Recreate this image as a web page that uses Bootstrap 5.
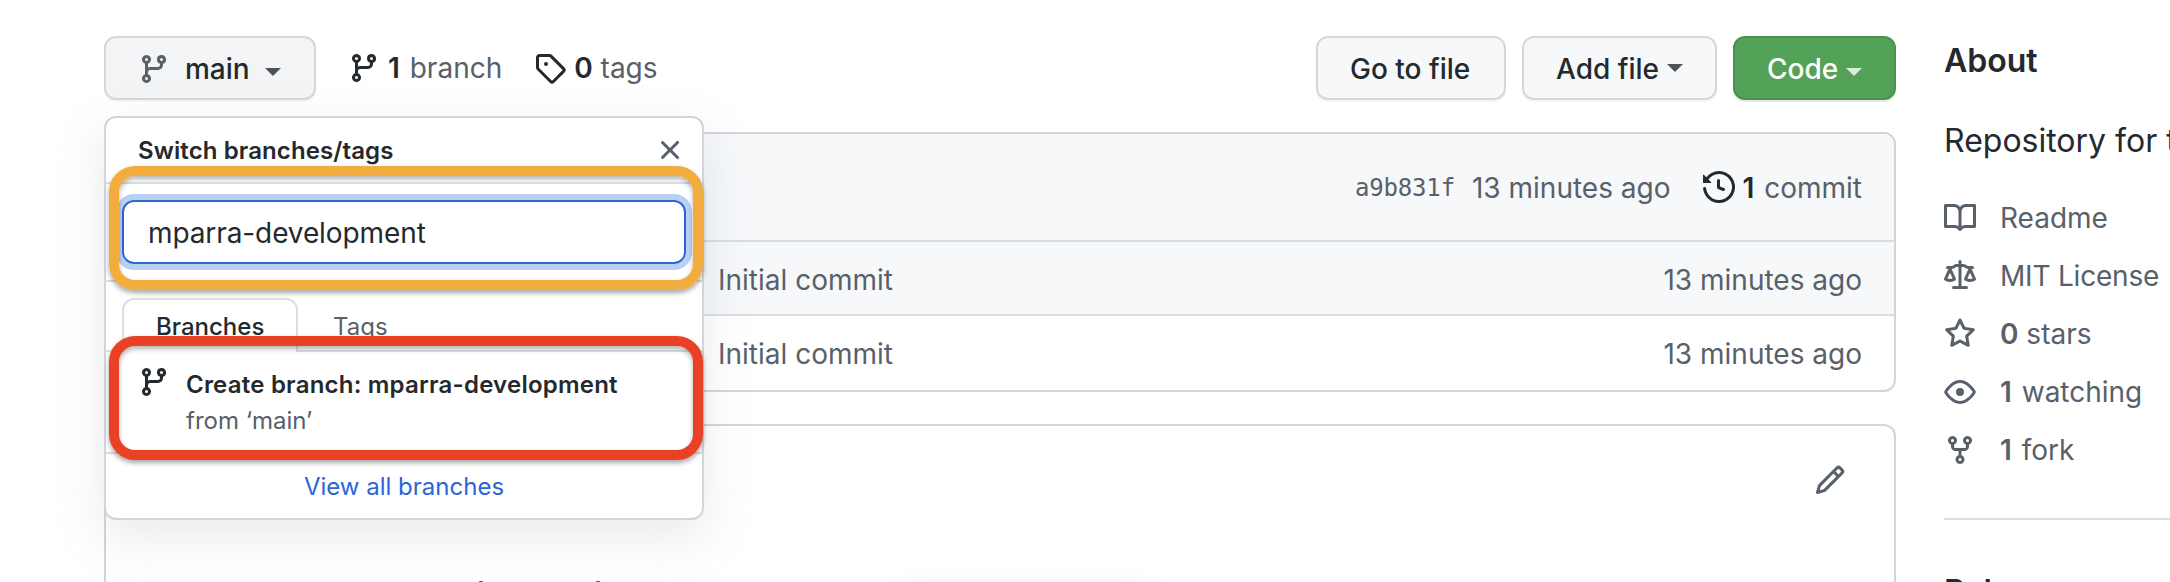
<!DOCTYPE html>
<html lang="en">
<head>
<meta charset="utf-8">
<title>Repository</title>
<link href="https://cdn.jsdelivr.net/npm/bootstrap@5.3.0/dist/css/bootstrap.min.css" rel="stylesheet">
<style>
:root{--ink:#24292e;--soft:#586069;--line:#d1d5da;--tint:#f6f8fa}
html,body{overflow:hidden}
body{font:28px/42px Inter,"Liberation Sans",sans-serif;color:var(--ink);width:2170px;height:582px;background:#fff}
svg{fill:currentColor;flex:none;width:32px;height:32px;display:block}
.soft{color:var(--soft)}
b,.semi{font-weight:600}
.one{margin-right:2px}
.t{display:inline-block;white-space:pre}
.page{padding:36px 0 0 104px;gap:48px;height:582px;overflow:hidden;position:relative}
.repo{width:1792px;flex:none}
.toolbar{height:64px;position:relative}
.gbtn{--bs-btn-font-size:28px;height:64px;border:2px solid #d5d7da;border-radius:12px;background:var(--tint);color:var(--ink);font-weight:500;padding:2px 32px 0;line-height:42px;display:flex;align-items:center;box-shadow:0 2px 0 rgba(27,31,35,.04);white-space:pre}
.gbtn.pressed{background:#f3f4f6}
.gbtn.green{background:#54a258;border-color:#489150;color:#fff;box-shadow:0 2px 0 rgba(27,31,35,.1)}
.tri{border:8px solid transparent;border-top-color:currentColor;border-bottom:0;opacity:.8;display:block;margin:-2px 0 0 8px}
.tri.low{margin-top:6px}
.panel{border:2px solid var(--line);border-radius:12px;overflow:hidden}
.listing{margin-top:32px;height:260px}
.commitbar{height:106px;background:var(--tint);padding:0 32px}
.commitbar span{padding-top:2px}
.filerow{height:74px;border-top:2px solid #d8dde2;padding:4px 32px 0 612px}
.filerow.first{background:var(--tint)}
.hash{font:24px/42px "DejaVu Sans Mono","Liberation Mono",monospace;letter-spacing:-.15px}
.menu{position:absolute;left:0;top:80px;width:600px;height:404px;background:#fff;border:2px solid var(--line);border-radius:12px;box-shadow:0 16px 48px rgba(149,157,165,.22);font-size:24px;line-height:36px;z-index:5}
.menu-head{height:66px;border-bottom:2px solid #dadfe4;padding:0 16px 0 32px}
.menu-head span{padding-top:1px;letter-spacing:.1px}
.menu-field{height:98px;border-bottom:2px solid #dadfe4;padding:16px}
.field{width:564px;height:64px;border:2px solid #2b65d9;border-radius:12px;box-shadow:0 0 0 6px #b9d0f1;padding:0 24px;line-height:62px;font-size:28px;letter-spacing:-.1px}
.tabs{height:70px;padding:16px 0 0 16px;border-bottom:2px solid #dadfe4}
.tab{width:176px;height:54px;border:2px solid #dadfe4;border-bottom:0;border-radius:12px 12px 0 0;background:#fff;padding:9px 0 0 32px}
.create{height:102px;padding:14px 32px 0;border-bottom:2px solid #dadfe4}
.ring{position:absolute;left:3px;width:594px;height:124px;border:10px solid #f2ad3e;border-radius:26px;box-shadow:0 3px 5px rgba(0,0,0,.35),inset 0 3px 5px rgba(0,0,0,.3)}
.ring.red{border-color:#ea4025}
.readme{margin-top:32px;height:158px;border-bottom:0;border-radius:12px 12px 0 0;padding:38px 48px 0 372px}
.peek{height:3px;gap:111px}
.peek i{width:6px;height:3px;background:#3a3e43;border-radius:3px 3px 0 0}
.toast-shade{position:absolute;left:900px;top:592px;width:250px;height:40px;box-shadow:0 0 26px rgba(0,0,0,.12)}
.side{width:226px;overflow:hidden;flex:none;white-space:nowrap}
.side h2{font-size:32px;line-height:48px;font-weight:600;margin:0;padding-top:1px}
.lede{font-size:32px;line-height:48px;margin-top:32px}
.meta{height:58px;gap:24px}
</style>
</head>
<body>
<svg class="d-none">
<symbol id="branch" viewBox="0 0 16 16"><path fill-rule="evenodd" d="M11.75 2.5a.75.75 0 100 1.5.75.75 0 000-1.5zm-2.25.75a2.25 2.25 0 113 2.122V6A2.5 2.5 0 0110 8.5H6a1 1 0 00-1 1v1.128a2.251 2.251 0 11-1.5 0V5.372a2.25 2.25 0 111.5 0v1.836A2.492 2.492 0 016 7h4a1 1 0 001-1v-.628A2.25 2.25 0 019.5 3.25zM4.25 12a.75.75 0 100 1.5.75.75 0 000-1.5zM3.5 3.25a.75.75 0 111.5 0 .75.75 0 01-1.5 0z"/></symbol>
</svg>
<div class="page d-flex">
<main class="repo">
  <div class="toolbar d-flex align-items-center">
    <button class="btn gbtn pressed" style="width:212px"><svg class="soft"><use href="#branch"/></svg><span class="t" style="margin-left:15px">main</span><i class="tri low" style="margin-left:15px"></i></button>
    <svg style="margin-left:32px"><use href="#branch"/></svg>
    <span class="t" style="margin-left:8px"><b class="one">1</b> <span class="soft">branch</span></span>
    <svg viewBox="0 0 16 16" style="margin-left:32px"><path fill-rule="evenodd" d="M2.5 7.775V2.75a.25.25 0 01.25-.25h5.025a.25.25 0 01.177.073l6.25 6.25a.25.25 0 010 .354l-5.025 5.025a.25.25 0 01-.354 0l-6.25-6.25a.25.25 0 01-.073-.177zm-1.5 0V2.75C1 1.784 1.784 1 2.75 1h5.025c.464 0 .91.184 1.238.513l6.25 6.25a1.75 1.75 0 010 2.474l-5.026 5.026a1.75 1.75 0 01-2.474 0l-6.25-6.25A1.75 1.75 0 011 7.775zM6 5a1 1 0 100 2 1 1 0 000-2z"/></svg>
    <span class="t" style="margin-left:8px"><b>0</b> <span class="soft">tags</span></span>
    <div class="d-flex gap-3 ms-auto">
      <button class="btn gbtn" style="width:190px">Go to file</button>
      <button class="btn gbtn" style="width:195px">Add file<i class="tri"></i></button>
      <button class="btn gbtn green" style="width:163px">Code<i class="tri low"></i></button>
    </div>
    <div class="menu">
      <div class="menu-head d-flex align-items-center justify-content-between"><span class="semi">Switch branches/tags</span><svg class="soft" viewBox="0 0 16 16"><path d="M3.72 3.72a.75.75 0 011.06 0L8 6.94l3.22-3.22a.75.75 0 111.06 1.06L9.06 8l3.22 3.22a.75.75 0 11-1.06 1.06L8 9.06l-3.22 3.22a.75.75 0 01-1.06-1.06L6.94 8 3.72 4.78a.75.75 0 010-1.06z"/></svg></div>
      <div class="menu-field"><div class="field">mparra-development</div></div>
      <div class="tabs d-flex"><div class="tab fw-medium">Branches</div><div class="soft" style="padding:11px 0 0 35px">Tags</div></div>
      <div class="create d-flex"><svg><use href="#branch"/></svg><div style="margin:1px 0 0 16px"><div class="semi" style="letter-spacing:.22px">Create branch: mparra-development</div><div class="soft">from ‘main’</div></div></div>
      <div class="text-center" style="color:#2b65d9;padding-top:15px">View all branches</div>
      <div class="ring" style="top:48px"></div>
      <div class="ring red" style="top:218px"></div>
    </div>
  </div>
  <div class="panel listing">
    <div class="commitbar d-flex align-items-center justify-content-end soft"><span class="hash">a9b831f</span><span style="margin-left:17px">13 minutes ago</span><svg viewBox="0 0 16 16" style="margin-left:32px;color:var(--ink)"><path fill-rule="evenodd" d="M1.643 3.143L.427 1.927A.25.25 0 000 2.104V5.75c0 .138.112.25.25.25h3.646a.25.25 0 00.177-.427L2.715 4.215a6.5 6.5 0 11-1.18 4.458.75.75 0 10-1.493.154 8.001 8.001 0 101.6-5.684zM7.75 4a.75.75 0 01.75.75v2.992l2.028.812a.75.75 0 01-.557 1.392l-2.5-1A.75.75 0 017 8.25v-3.5A.75.75 0 017.75 4z"/></svg><span style="margin-left:8px"><b class="one" style="color:var(--ink)">1</b> commit</span></div>
    <div class="filerow first d-flex align-items-center justify-content-between soft"><span>Initial commit</span><span>13 minutes ago</span></div>
    <div class="filerow d-flex align-items-center justify-content-between soft"><span>Initial commit</span><span>13 minutes ago</span></div>
  </div>
  <div class="panel readme d-flex flex-column"><svg class="soft align-self-end" viewBox="0 0 16 16"><path fill-rule="evenodd" d="M11.013 1.427a1.75 1.75 0 012.474 0l1.086 1.086a1.75 1.75 0 010 2.474l-8.61 8.61c-.21.21-.47.364-.756.445l-3.251.93a.75.75 0 01-.927-.928l.929-3.25a1.75 1.75 0 01.445-.758l8.61-8.61zm1.414 1.06a.25.25 0 00-.354 0L10.811 3.75l1.439 1.44 1.263-1.263a.25.25 0 000-.354l-1.086-1.086zM11.189 6.25L9.75 4.81l-6.286 6.287a.25.25 0 00-.064.108l-.558 1.953 1.953-.558a.249.249 0 00.108-.064l6.286-6.286z"/></svg><div class="peek d-flex mt-auto" style="margin-bottom:-2px"><i></i><i></i></div></div>
</main>
<aside class="side">
  <h2>About</h2>
  <div class="lede">Repository for the</div>
  <div class="soft" style="margin-top:24px">
    <div class="meta d-flex align-items-center"><svg viewBox="0 0 16 16"><path fill-rule="evenodd" d="M0 1.75A.75.75 0 01.75 1h4.253c1.227 0 2.317.59 3 1.501A3.744 3.744 0 0111.006 1h4.245a.75.75 0 01.75.75v10.5a.75.75 0 01-.75.75h-4.507a2.25 2.25 0 00-1.591.659l-.622.621a.75.75 0 01-1.06 0l-.622-.621A2.25 2.25 0 005.258 13H.75a.75.75 0 01-.75-.75V1.75zm8.755 3a2.25 2.25 0 012.25-2.25H14.5v9h-3.757c-.71 0-1.4.201-1.992.572l.004-7.322zm-1.504 7.324l.004-5.073-.002-2.253A2.25 2.25 0 005.003 2.5H1.5v9h3.757a3.75 3.75 0 011.994.574z"/></svg><span>Readme</span></div>
    <div class="meta d-flex align-items-center"><svg viewBox="0 0 16 16"><path fill-rule="evenodd" d="M8.75.75a.75.75 0 00-1.5 0V2h-.984c-.305 0-.604.08-.869.23l-1.288.737A.25.25 0 013.984 3H1.75a.75.75 0 000 1.5h.428L.066 9.192a.75.75 0 00.154.838l.53-.53-.53.53v.001l.002.002.002.002.006.006.016.015.045.04a3.514 3.514 0 00.686.45A4.492 4.492 0 003 11c.88 0 1.556-.22 2.023-.454a3.515 3.515 0 00.686-.45l.045-.04.016-.015.006-.006.002-.002.001-.002L5.25 9.5l.53.53a.75.75 0 00.154-.838L3.822 4.5h.162c.305 0 .604-.08.869-.23l1.289-.737a.25.25 0 01.124-.033h.984V13h-2.5a.75.75 0 000 1.5h6.5a.75.75 0 000-1.5h-2.5V3.5h.984a.25.25 0 01.124.033l1.29.736c.264.152.563.231.868.231h.162l-2.112 4.692a.75.75 0 00.154.838l.53-.53-.53.53v.001l.002.002.002.002.006.006.016.015.045.04a3.517 3.517 0 00.686.45A4.492 4.492 0 0013 11c.88 0 1.556-.22 2.023-.454a3.512 3.512 0 00.686-.45l.045-.04.01-.01.006-.005.006-.006.002-.002.001-.002-.529-.531.53.53a.75.75 0 00.154-.838L13.823 4.5h.427a.75.75 0 000-1.5h-2.234a.25.25 0 01-.124-.033l-1.29-.736A1.75 1.75 0 009.735 2H8.75V.75zM1.695 9.227c.285.135.718.273 1.305.273s1.02-.138 1.305-.273L3 6.327l-1.305 2.9zm10 0c.285.135.718.273 1.305.273s1.02-.138 1.305-.273L13 6.327l-1.305 2.9z"/></svg><span style="letter-spacing:-.2px">MIT License</span></div>
    <div class="meta d-flex align-items-center"><svg viewBox="0 0 16 16"><path fill-rule="evenodd" d="M8 .25a.75.75 0 01.673.418l1.882 3.815 4.21.612a.75.75 0 01.416 1.279l-3.046 2.97.719 4.192a.75.75 0 01-1.088.791L8 12.347l-3.766 1.98a.75.75 0 01-1.088-.79l.72-4.194L.818 6.374a.75.75 0 01.416-1.28l4.21-.611L7.327.668A.75.75 0 018 .25zm0 2.445L6.615 5.5a.75.75 0 01-.564.41l-3.097.45 2.24 2.184a.75.75 0 01.216.664l-.528 3.084 2.769-1.456a.75.75 0 01.698 0l2.77 1.456-.53-3.084a.75.75 0 01.216-.664l2.24-2.183-3.096-.45a.75.75 0 01-.564-.41L8 2.694v.001z"/></svg><span><b>0</b> stars</span></div>
    <div class="meta d-flex align-items-center"><svg viewBox="0 0 16 16"><path fill-rule="evenodd" d="M1.679 7.932c.412-.621 1.242-1.75 2.366-2.717C5.175 4.242 6.527 3.5 8 3.5c1.473 0 2.824.742 3.955 1.715 1.124.967 1.954 2.096 2.366 2.717a.119.119 0 010 .136c-.412.621-1.242 1.75-2.366 2.717C10.825 11.758 9.473 12.5 8 12.5c-1.473 0-2.824-.742-3.955-1.715C2.92 9.818 2.09 8.69 1.679 8.068a.119.119 0 010-.136zM8 2c-1.981 0-3.67.992-4.933 2.078C1.797 5.169.88 6.423.43 7.1a1.619 1.619 0 000 1.798c.45.678 1.367 1.932 2.637 3.024C4.329 13.008 6.019 14 8 14c1.981 0 3.67-.992 4.933-2.078 1.27-1.091 2.187-2.345 2.637-3.023a1.619 1.619 0 000-1.798c-.45-.678-1.367-1.932-2.637-3.023C11.671 2.992 9.981 2 8 2zm0 8a2 2 0 100-4 2 2 0 000 4z"/></svg><span><b class="one">1</b> watching</span></div>
    <div class="meta d-flex align-items-center"><svg viewBox="0 0 16 16"><path fill-rule="evenodd" d="M5 3.25a.75.75 0 11-1.5 0 .75.75 0 011.5 0zm0 2.122a2.25 2.25 0 10-1.5 0v.878A2.25 2.25 0 005.75 8.5h1.5v2.128a2.251 2.251 0 101.5 0V8.5h1.5a2.25 2.25 0 002.25-2.25v-.878a2.25 2.25 0 10-1.5 0v.878a.75.75 0 01-.75.75h-4.5A.75.75 0 015 6.25v-.878zm3.75 7.378a.75.75 0 11-1.5 0 .75.75 0 011.5 0zm3-8.75a.75.75 0 100-1.5.75.75 0 000 1.5z"/></svg><span><b class="one">1</b> fork</span></div>
  </div>
  <div style="border-top:2px solid #dadfe4;margin-top:39px;padding-top:47px"><h2>Releases</h2></div>
</aside>
<div class="toast-shade"></div>
</div>
<script src="https://cdn.jsdelivr.net/npm/bootstrap@5.3.0/dist/js/bootstrap.bundle.min.js"></script>
</body>
</html>
